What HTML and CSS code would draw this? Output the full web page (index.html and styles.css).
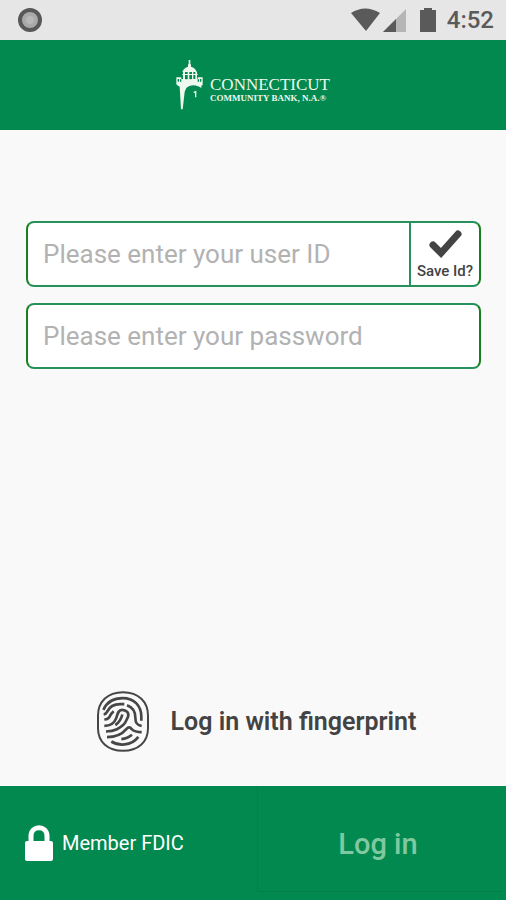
FILE: index.html
```html
<!DOCTYPE html>
<html lang="en">
<head>
<meta charset="utf-8">
<meta name="viewport" content="width=device-width, initial-scale=1">
<title>Connecticut Community Bank</title>
<link rel="stylesheet" href="styles.css">
</head>
<body>
<div class="status">
  <svg class="status-dot" viewBox="0 0 24 24" aria-hidden="true"><circle cx="12" cy="12" r="10" fill="#a9a9a9" stroke="#585858" stroke-width="4"/><circle cx="12" cy="12" r="4" fill="#b8b8b8"/></svg>
  <div class="status-right">
    <svg class="signals" viewBox="0 0 86 26" aria-hidden="true">
      <path d="M0 6Q14 -3 29 6L15 24Z" fill="#5a5a5a"/>
      <path d="M32 25L55 2V25Z" fill="#b5b5b5"/>
      <path d="M32 25L45 12V25Z" fill="#5a5a5a"/>
      <path d="M69 3H73V1H81V3H85V25H69Z" fill="#5a5a5a"/>
    </svg>
    <span class="time">4:52</span>
  </div>
</div>
<header class="header">
  <svg class="lighthouse" viewBox="0 0 81 150" aria-hidden="true">
    <g fill="#eef8ee">
      <path d="M38 0H43V11L45 14V20C54 22 60 28 62 36H19C21 28 28 22 36 20V14L38 11Z"/>
      <path d="M21 35H27V58H21ZM35 35H40V58H35ZM48 35H52V58H48ZM58 35H63V58H58Z"/>
      <path d="M19 42H65V45H19Z"/>
      <path d="M1 52H16V57H65V52H80V74L76 78V84C60 73 43 73 31 84L26 95L20 148H15L11 80L4 76L1 73Z"/>
      <path d="M53 95L61 92V112H57V98L53 99Z"/>
    </g>
    <path d="M5 57H9V65H5ZM12 58H16V65H12ZM65 58H69V65H65ZM72 57H76V65H72ZM29 52H34V58H29ZM42 52H46V58H42Z" fill="#02894f"/>
  </svg>
  <div class="brand">
    <span class="brand-name">CONNECTICUT</span>
    <span class="brand-sub">COMMUNITY BANK, N.A.®</span>
  </div>
</header>
<form class="form">
  <main class="main">
    <div class="field">
      <input class="entry" type="text" aria-label="User ID" placeholder="Please enter your user ID">
      <label class="save">
        <input class="save-box" type="checkbox" checked>
        <svg class="check" viewBox="0 0 33 30" aria-hidden="true"><path d="M4 16L12 24L29 5" fill="none" stroke="#434343" stroke-width="7" stroke-linecap="round" stroke-linejoin="miter"/></svg>
        <span>Save Id?</span>
      </label>
    </div>
    <div class="field">
      <input class="entry" type="password" aria-label="Password" placeholder="Please enter your password">
    </div>
    <button class="finger" type="button">
      <svg class="print" viewBox="35 32 156 182" aria-hidden="true">
        <g fill="none" stroke="#464646" stroke-width="8" stroke-linecap="butt">
          <path stroke-width="6" d="M113 35C66 35 38 65 38 105V143C38 185 68 211 113 211S188 185 188 143V105C188 65 160 35 113 35Z"/>
          <path d="M54 88C65 64 86 53 112 53C147 53 168 76 168 109V121"/>
          <path d="M57 117C69 116 72 113 74 106C77 100 79 97 85 92"/>
          <path d="M55 102C61 101 63 98 65 94C73 77 88 71 105 71H117"/>
          <path d="M125 74C145 81 150 94 150 111C150 128 155 135 169 136"/>
          <path d="M57 136C79 136 88 126 93 112C97 100 99 88 110 88C124 88 132 98 128 109C124 117 122 126 115 132C103 143 91 152 62 153"/>
          <path d="M111 102C107 119 101 126 90 134"/>
          <path d="M65 170C92 170 113 158 123 146Q132 135 139 146C146 153 154 155 169 155"/>
          <path d="M78 183C99 196 137 198 159 169"/>
          <path d="M108 176C123 175 131 171 140 163"/>
        </g>
      </svg>
      <span>Log in with fingerprint</span>
    </button>
  </main>
  <footer class="footer">
    <div class="member">
      <svg class="lock" viewBox="0 0 28 36" aria-hidden="true"><path d="M6 19V11C6 0 22 0 22 11V19" fill="none" stroke="#fff" stroke-width="5"/><rect y="16" width="28" height="20" rx="2" fill="#fff"/></svg>
      <span>Member FDIC</span>
    </div>
    <button class="login" type="submit" disabled>Log in</button>
  </footer>
</form>
</body>
</html>
```
FILE: styles.css
```css
* { box-sizing: border-box; }

body {
  margin: 0;
  min-height: 100vh;
  display: flex;
  flex-direction: column;
  background: #f9f9f9;
  color: #434343;
  font-family: Roboto, "Liberation Sans", sans-serif;
}

button, input { font: inherit; color: inherit; }

.status {
  height: 40px;
  flex: none;
  display: flex;
  align-items: center;
  justify-content: space-between;
  padding: 0 12px 0 18px;
  background: #e6e6e6;
}
.status-dot { width: 24px; height: 24px; }
.status-right { display: flex; align-items: center; gap: 10px; }
.signals { width: 86px; height: 26px; }
.time { font-size: 24px; line-height: 42px; color: #5a5a5a; font-weight: 500; }

.header {
  height: 90px;
  flex: none;
  display: flex;
  align-items: center;
  justify-content: center;
  gap: 7px;
  background: #02894f;
  color: #eef8ee;
}
.lighthouse { width: 27px; height: 50px; }
.brand {
  display: flex;
  flex-direction: column;
  padding-top: 10px;
  font-family: "Liberation Serif", serif;
}
.brand-name { font-size: 17px; line-height: 17px; }
.brand-sub { font-size: 9px; line-height: 11px; font-weight: 700; }

.form { flex: 1; display: flex; flex-direction: column; }
.main {
  flex: 1;
  display: flex;
  flex-direction: column;
  gap: 16px;
  padding: 91px 25px 34px 26px;
}

.field {
  display: flex;
  height: 66px;
  border: 2px solid #26915a;
  border-left-color: #16801f;
  border-right-color: #16801f;
  border-radius: 8px;
  background: #fff;
}
.entry {
  flex: 1;
  min-width: 0;
  border: 0;
  padding: 0 15px;
  background: none;
  outline: none;
  font-size: 26px;
}
.entry::placeholder { color: #b2b2b2; opacity: 1; }

.save {
  position: relative;
  width: 70px;
  display: flex;
  flex-direction: column;
  align-items: center;
  justify-content: center;
  gap: 3px;
  border-left: 2px solid #26915a;
  font-size: 15px;
  line-height: 18px;
  font-weight: 500;
}
.save-box { position: absolute; inset: 0; margin: 0; width: 100%; height: 100%; opacity: 0; }
.check { width: 33px; height: 30px; visibility: hidden; }
.save-box:checked + .check { visibility: visible; }

.finger {
  margin-top: auto;
  align-self: center;
  display: flex;
  align-items: center;
  gap: 22px;
  padding: 0 0 0 6px;
  border: 0;
  background: none;
  font-size: 25px;
  font-weight: 600;
}
.print { width: 52px; height: 61px; }

.footer {
  height: 114px;
  flex: none;
  display: grid;
  grid-template-columns: 1fr 1fr;
  padding: 0 4px 8px 0;
  background: #02894f;
  color: #fff;
}
.member {
  display: flex;
  align-items: center;
  gap: 9px;
  padding: 7px 0 0 25px;
  font-size: 20px;
}
.lock { width: 28px; height: 36px; }
.login {
  margin-left: 6px;
  padding: 11px 4px 0 0;
  border: 0;
  border-left: 1px solid #02804a;
  border-bottom: 1px solid #02804a;
  background: none;
  color: #80c9a0;
  font-size: 29px;
  font-weight: 500;
}
```
